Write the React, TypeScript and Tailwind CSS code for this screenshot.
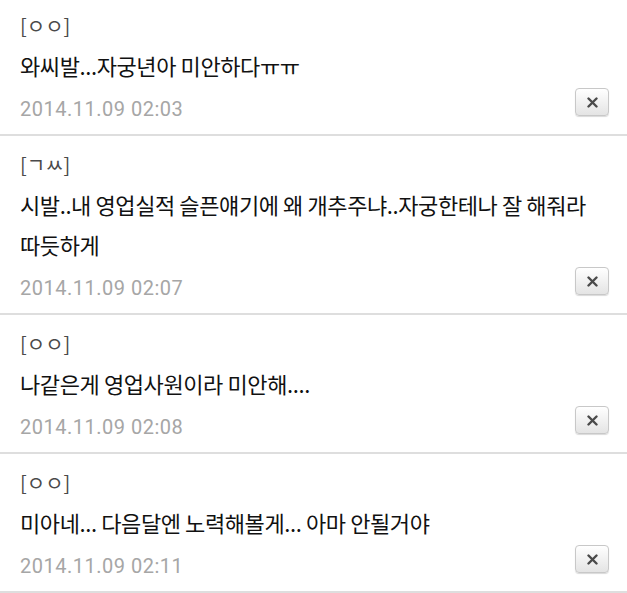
import React from "react";

type Item = { name: string; text: string; date: string };

const items: Item[] = [
  { name: "[ㅇㅇ]", text: "와씨발...자궁년아 미안하다ㅠㅠ", date: "2014.11.09 02:03" },
  {
    name: "[ㄱㅆ]",
    text: "시발..내 영업실적 슬픈얘기에 왜 개추주냐..자궁한테나 잘 해줘라 따듯하게",
    date: "2014.11.09 02:07",
  },
  { name: "[ㅇㅇ]", text: "나같은게 영업사원이라 미안해....", date: "2014.11.09 02:08" },
  { name: "[ㅇㅇ]", text: "미아네... 다음달엔 노력해볼게... 아마 안될거야", date: "2014.11.09 02:11" },
];

function CloseButton() {
  return (
    <button className="w-[34px] h-[28px] rounded-[4px] border border-[#c8c8c8] bg-gradient-to-b from-[#ffffff] to-[#e4e4e4] shadow-[0_1px_1px_rgba(0,0,0,0.15)] flex items-center justify-center -mt-[14px]">
      <svg width="11" height="11" viewBox="0 0 11 11">
        <path d="M1.5 1.5 L9.5 9.5 M9.5 1.5 L1.5 9.5" stroke="#4a4a4a" strokeWidth="2.4" strokeLinecap="round" />
      </svg>
    </button>
  );
}

export default function App() {
  return (
    <div
      className="w-[627px] h-[593px] bg-white overflow-hidden"
      style={{ fontFamily: '"Noto Sans CJK KR", "Noto Sans", sans-serif' }}
    >
      {items.map((it, i) => (
        <div
          key={i}
          className={`border-b-2 border-[#dedede] pl-[20px] pr-[18px] pb-[11px] ${i === 0 ? "pt-[13px]" : "pt-[16px]"}`}
        >
          <div className="text-[20px] leading-[26px] text-[#4a4a4a]">{it.name}</div>
          <div className="mt-[6px] text-[22px] leading-[40px] text-[#111111] tracking-[-0.4px] break-keep">
            {it.text}
          </div>
          <div className="mt-[10px] flex items-center justify-between h-[28px]">
            <span
              className="text-[20px] text-[#a6a6a6] tracking-[0.5px]"
              style={{ fontFamily: 'Roboto, "Noto Sans", sans-serif' }}
            >
              {it.date}
            </span>
            <CloseButton />
          </div>
        </div>
      ))}
    </div>
  );
}
